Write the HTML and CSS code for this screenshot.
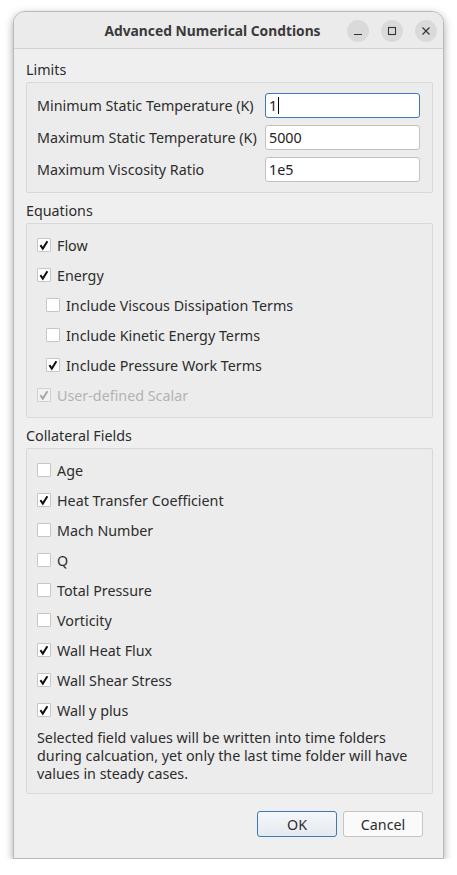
FILE: index.html
```html
<!DOCTYPE html>
<html lang="en">
<head>
    <meta charset="UTF-8">
    <meta name="viewport" content="width=device-width, initial-scale=1.0">
    <title>Advanced Numerical Condtions</title>
    <link rel="stylesheet" href="styles.css">
</head>
<body>
    <div class="window">
        <div class="titlebar">
            <span class="title">Advanced Numerical Condtions</span>
            <div class="controls">
                <span class="ctl"><svg width="10" height="10" viewBox="0 0 10 10"><line x1="1" y1="8.5" x2="9" y2="8.5" stroke="#333" stroke-width="1.2"/></svg></span>
                <span class="ctl"><svg width="10" height="10" viewBox="0 0 10 10"><rect x="1.5" y="1.5" width="7" height="7" fill="none" stroke="#333" stroke-width="1.1"/></svg></span>
                <span class="ctl"><svg width="10" height="10" viewBox="0 0 10 10"><path d="M1.5 1.5 L8.5 8.5 M8.5 1.5 L1.5 8.5" stroke="#333" stroke-width="1.2"/></svg></span>
            </div>
        </div>

        <div class="content">
            <div class="group-title">Limits</div>
            <div class="group limits">
                <div class="field">
                    <label>Minimum Static Temperature (K)</label>
                    <div class="input focused">1<span class="caret"></span></div>
                </div>
                <div class="field">
                    <label>Maximum Static Temperature (K)</label>
                    <div class="input">5000</div>
                </div>
                <div class="field">
                    <label>Maximum Viscosity Ratio</label>
                    <div class="input">1e5</div>
                </div>
            </div>

            <div class="group-title">Equations</div>
            <div class="group checks" id="equations"></div>

            <div class="group-title">Collateral Fields</div>
            <div class="group checks">
                <div id="fields"></div>
                <p class="note">Selected field values will be written into time folders during calcuation, yet only the last time folder will have values in steady cases.</p>
            </div>

            <div class="buttons">
                <button class="btn default">OK</button>
                <button class="btn">Cancel</button>
            </div>
        </div>
    </div>

    <script>
        const equations = [
            { name: 'Flow', checked: true },
            { name: 'Energy', checked: true },
            { name: 'Include Viscous Dissipation Terms', checked: false, sub: true },
            { name: 'Include Kinetic Energy Terms', checked: false, sub: true },
            { name: 'Include Pressure Work Terms', checked: true, sub: true },
            { name: 'User-defined Scalar', checked: true, disabled: true }
        ];
        const fields = [
            { name: 'Age', checked: false },
            { name: 'Heat Transfer Coefficient', checked: true },
            { name: 'Mach Number', checked: false },
            { name: 'Q', checked: false },
            { name: 'Total Pressure', checked: false },
            { name: 'Vorticity', checked: false },
            { name: 'Wall Heat Flux', checked: true },
            { name: 'Wall Shear Stress', checked: true },
            { name: 'Wall y plus', checked: true }
        ];

        function addRows(container, items) {
            items.forEach(item => {
                const row = document.createElement('div');
                row.className = 'check-row';
                if (item.sub) row.classList.add('sub');
                if (item.disabled) row.classList.add('disabled');

                const box = document.createElement('span');
                box.className = 'box';
                if (item.checked) {
                    box.innerHTML = '<svg width="12" height="12" viewBox="0 0 12 12"><path d="M2.4 6.2 L4.8 9.6 L9.4 2.2" fill="none" stroke="currentColor" stroke-width="2"/></svg>';
                }

                const text = document.createElement('span');
                text.textContent = item.name;

                row.appendChild(box);
                row.appendChild(text);
                container.appendChild(row);
            });
        }

        addRows(document.getElementById('equations'), equations);
        addRows(document.getElementById('fields'), fields);
    </script>
</body>
</html>
```

FILE: styles.css
```css
body {
    margin: 0;
    padding: 0;
    background-color: #ffffff;
    font-family: 'Noto Sans', 'Open Sans', sans-serif;
    font-size: 14.3px;
    color: #2c2c2c;
}

.window {
    margin: 11px 0 0 13px;
    width: 429px;
    height: 846px;
    border: 1px solid #b9b9b9;
    border-radius: 12px 12px 0 0;
    background-color: #efefef;
    box-shadow: 0 3px 8px rgba(0, 0, 0, 0.35);
    overflow: hidden;
}

.titlebar {
    height: 36px;
    background-color: #ebebeb;
    border-bottom: 1px solid #d2d2d2;
    display: flex;
    align-items: center;
    justify-content: center;
    position: relative;
}

.title {
    font-size: 13.8px;
    font-weight: bold;
    color: #3a3a3a;
    margin-right: 32px;
}

.controls {
    position: absolute;
    right: 6px;
    top: 8px;
    display: flex;
    gap: 12px;
}

.ctl {
    width: 22px;
    height: 22px;
    border-radius: 50%;
    background-color: #dadada;
    display: flex;
    align-items: center;
    justify-content: center;
}

.content {
    padding: 11px 10px 0 12px;
}

.group-title {
    height: 20px;
    line-height: 20px;
    margin-bottom: 2px;
}

.group {
    border: 1px solid #d8d8d8;
    border-radius: 2px;
    background-color: #ececec;
    margin-bottom: 8px;
}

.limits {
    padding: 10px 12px 10px 10px;
    display: flex;
    flex-direction: column;
    gap: 7px;
}

.field {
    display: flex;
    align-items: center;
    justify-content: space-between;
}

.input {
    width: 150px;
    height: 23px;
    line-height: 23px;
    padding-left: 3px;
    border: 1px solid #c2c2c2;
    border-radius: 3px;
    background-color: #ffffff;
    color: #222;
}

.input.focused {
    border-color: #3d7ab5;
}

.caret {
    display: inline-block;
    width: 1px;
    height: 17px;
    background-color: #000;
    vertical-align: -3px;
    margin-left: 1px;
}

.checks {
    padding: 6px 10px 7px 10px;
}

.check-row {
    height: 30px;
    display: flex;
    align-items: center;
    gap: 6px;
}

.check-row.sub {
    padding-left: 9px;
}

.check-row.disabled {
    color: #b3b3b3;
}

.box {
    width: 12px;
    height: 12px;
    border: 1px solid #c6c6c6;
    border-radius: 1px;
    background-color: #ffffff;
    color: #111;
    display: flex;
    align-items: center;
    justify-content: center;
}

.disabled .box {
    background-color: #f2f2f2;
    border-color: #d0d0d0;
    color: #a8a8a8;
}

.note {
    margin: 4px 0 3px 0;
    line-height: 18px;
}

.buttons {
    display: flex;
    justify-content: flex-end;
    gap: 6px;
    padding-top: 9px;
    padding-right: 10px;
}

.btn {
    width: 80px;
    height: 26px;
    font-family: inherit;
    font-size: 14.3px;
    color: #2c2c2c;
    background-color: #fafafa;
    border: 1px solid #c4c4c4;
    border-radius: 3px;
}

.btn.default {
    border-color: #3d7ab5;
    background: linear-gradient(#f4f7fa, #e4eaf0);
}
```
